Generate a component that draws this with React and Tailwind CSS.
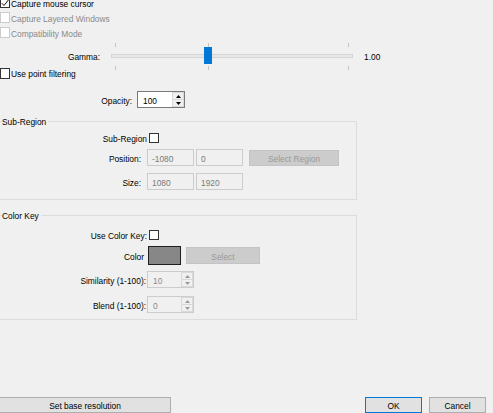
import React from 'react';

function CheckBox({ checked, disabled, small }) {
    const size = small ? 'w-[10px] h-[10px]' : 'w-[10px] h-[11px]';
    const look = disabled ? 'border-[#cccccc] bg-white' : 'border-[#333333] bg-white';
    return (
        <div className={`${size} ${look} border shrink-0 flex items-center justify-center`}>
            {checked && (
                <svg width="8" height="8" viewBox="0 0 8 8">
                    <path d="M0.8 4.2 L3 6.5 L7.4 1" fill="none" stroke="#111" strokeWidth="1" />
                </svg>
            )}
        </div>
    );
}

function Arrow({ down, color }) {
    return (
        <svg width="5" height="3" viewBox="0 0 5 3">
            <path d={down ? 'M0 0 L5 0 L2.5 3 Z' : 'M0 3 L5 3 L2.5 0 Z'} fill={color} />
        </svg>
    );
}

function SpinBox({ value, disabled }) {
    const box = disabled
        ? 'w-[47px] border-[#cccccc] bg-[#f0f0f0] text-[#8a8a8a]'
        : 'w-[48px] border-[#7a7a7a] bg-white text-black';
    const arrow = disabled ? '#9a9a9a' : '#000000';
    return (
        <div className={`${box} h-[17px] border flex`}>
            <div className="flex-1 flex items-center pl-[5px] pt-[2px]">{value}</div>
            <div className="w-[12px] flex flex-col">
                <div className="flex-1 flex items-center justify-center border border-[#d9d9d9] bg-[#f0f0f0]">
                    <Arrow color={arrow} />
                </div>
                <div className="flex-1 flex items-center justify-center border border-t-0 border-[#d9d9d9] bg-[#f0f0f0]">
                    <Arrow down color={arrow} />
                </div>
            </div>
        </div>
    );
}

function Field({ value, className }) {
    return (
        <div className={`w-[47px] h-[17px] border border-[#cccccc] bg-[#f0f0f0] text-[#7a7a7a] flex items-center pl-[4px] pt-[2px] ${className}`}>
            {value}
        </div>
    );
}

function Group({ title, className, children }) {
    return (
        <div className={`relative -ml-[1px] w-[358px] border border-[#dcdcdc] ${className}`}>
            <span className="absolute -top-[7px] left-[2px] pr-[2px] pt-[2px] bg-[#f0f0f0]">{title}</span>
            {children}
        </div>
    );
}

export default function App() {
    return (
        <div className="w-[493px] h-[413px] overflow-hidden bg-[#f0f0f0] text-[8.4px] leading-[10px] text-black font-['Liberation_Sans',Arial,sans-serif] flex flex-col">
            <div className="-mt-[5px] h-[16px] flex items-center">
                <CheckBox checked />
                <span className="ml-[1px] pt-[2px]">Capture mouse cursor</span>
            </div>
            <div className="h-[15px] flex items-center">
                <CheckBox disabled />
                <span className="ml-[1px] pt-[2px] text-[#8a8a8a]">Capture Layered Windows</span>
            </div>
            <div className="h-[15px] flex items-center">
                <CheckBox disabled />
                <span className="ml-[1px] pt-[2px] text-[#8a8a8a]">Compatibility Mode</span>
            </div>

            {/* gamma */}
            <div className="h-[27px] flex items-start">
                <span className="w-[100px] text-right mt-[10px] pt-[2px]">Gamma:</span>
                <svg className="ml-[8px] shrink-0" width="250" height="30" viewBox="0 0 250 30">
                    <rect x="3.5" y="14.5" width="241" height="3" fill="#e7e7e7" stroke="#d6d6d6" />
                    <path d="M7.5 3v4M100.5 3v4M240.5 3v4M7.5 26v4M100.5 26v4M240.5 26v4" stroke="#c4c4c4" />
                    <rect x="96" y="7" width="8" height="17" fill="#0078d7" />
                </svg>
                <span className="ml-[6px] mt-[10px] pt-[2px]">1.00</span>
            </div>

            <div className="h-[12px] flex items-center">
                <CheckBox />
                <span className="ml-[1px] pt-[2px]">Use point filtering</span>
            </div>

            <div className="mt-[12px] h-[17px] flex items-center">
                <span className="w-[132px] text-right pt-[2px]">Opacity:</span>
                <div className="ml-[5px]">
                    <SpinBox value="100" />
                </div>
            </div>

            <Group title="Sub-Region" className="mt-[13px] pt-[10px] pb-[9px]">
                <div className="h-[11px] flex items-center">
                    <span className="w-[147px] text-right pt-[2px]">Sub-Region</span>
                    <div className="ml-[2px]">
                        <CheckBox small />
                    </div>
                </div>
                <div className="mt-[6px] h-[17px] flex items-center">
                    <span className="w-[141px] text-right pt-[2px]">Position:</span>
                    <Field value="-1080" className="ml-[6px]" />
                    <Field value="0" className="ml-[2px]" />
                    <div className="ml-[6px] w-[90px] h-[16px] pt-[2px] bg-[#cccccc] border border-[#c4c4c4] text-[#9a9a9a] flex items-center justify-center">
                        Select Region
                    </div>
                </div>
                <div className="mt-[7px] h-[17px] flex items-center">
                    <span className="w-[141px] text-right pt-[2px]">Size:</span>
                    <Field value="1080" className="ml-[6px]" />
                    <Field value="1920" className="ml-[2px]" />
                </div>
            </Group>

            <Group title="Color Key" className="mt-[15px] pt-[13px] pb-[6px]">
                <div className="h-[11px] flex items-center">
                    <span className="w-[147px] text-right pt-[2px]">Use Color Key:</span>
                    <div className="ml-[2px]">
                        <CheckBox small />
                    </div>
                </div>
                <div className="mt-[6px] h-[19px] flex items-center">
                    <span className="w-[144px] text-right pt-[2px]">Color</span>
                    <div className="ml-[4px] w-[33px] h-[19px] border border-[#1e1e1e] bg-[#878787]" />
                    <div className="ml-[5px] w-[74px] h-[17px] pt-[2px] bg-[#cccccc] border border-[#c4c4c4] text-[#9a9a9a] flex items-center justify-center">
                        Select
                    </div>
                </div>
                <div className="mt-[6px] h-[17px] flex items-center">
                    <span className="w-[146px] text-right pt-[2px]">Similarity (1-100):</span>
                    <div className="ml-[1px]">
                        <SpinBox value="10" disabled />
                    </div>
                </div>
                <div className="mt-[8px] h-[17px] flex items-center">
                    <span className="w-[146px] text-right pt-[2px]">Blend (1-100):</span>
                    <div className="ml-[1px]">
                        <SpinBox value="0" disabled />
                    </div>
                </div>
            </Group>

            <div className="mt-[77px] flex">
                <div className="-ml-[1px] w-[172px] h-[16px] pt-[2px] border border-[#adadad] bg-[#e1e1e1] flex items-center justify-center">
                    Set base resolution
                </div>
                <div className="ml-auto w-[57px] h-[16px] pt-[2px] border border-[#0078d7] bg-[#e1e1e1] flex items-center justify-center">
                    OK
                </div>
                <div className="ml-[7px] mr-[7px] w-[57px] h-[16px] pt-[2px] border border-[#adadad] bg-[#e1e1e1] flex items-center justify-center">
                    Cancel
                </div>
            </div>
        </div>
    );
}
